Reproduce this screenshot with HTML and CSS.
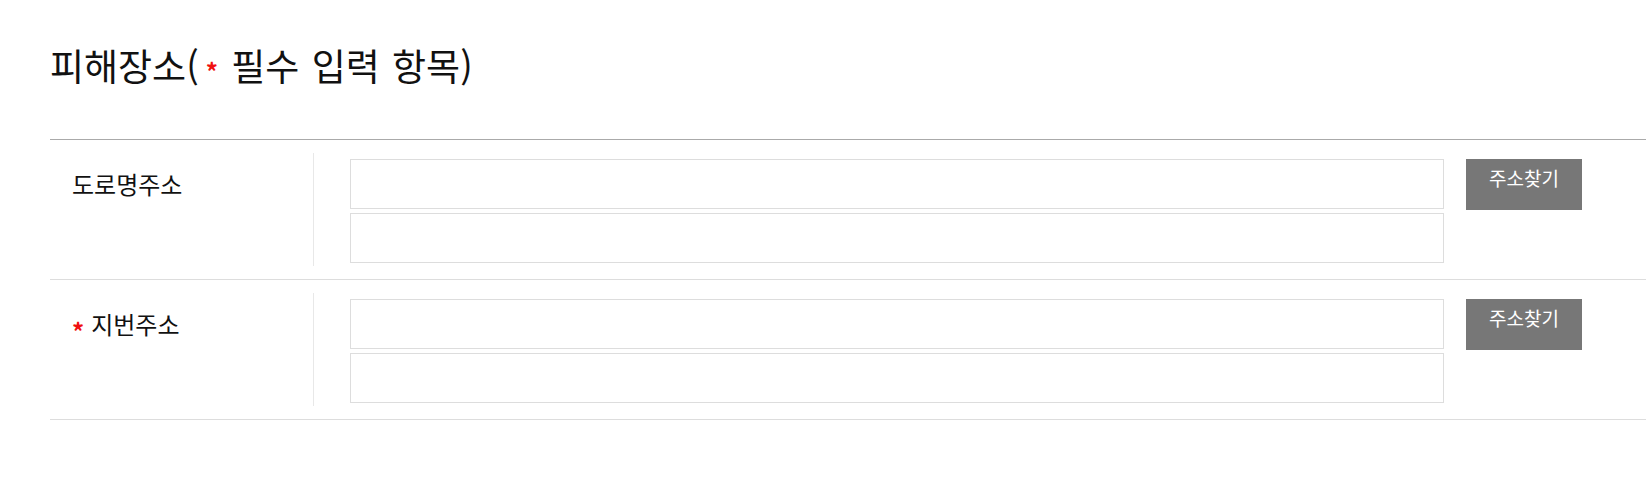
FILE: index.html
```html
<!DOCTYPE html>
<html lang="ko">
<head>
<meta charset="utf-8">
<title>피해장소</title>
<link rel="stylesheet" href="styles.css">
</head>
<body>
<div class="page">
  <h2 class="title">피해장소(<span class="req req-title">*</span> 필수 입력 항목)</h2>
  <div class="form">
    <div class="row">
      <div class="label">도로명주소</div>
      <div class="value">
        <div class="value-inner">
          <div class="inputs">
            <input class="field" type="text">
            <input class="field" type="text">
          </div>
          <button class="btn" type="button">주소찾기</button>
        </div>
      </div>
    </div>
    <div class="row">
      <div class="label"><span class="req req-label">*</span>지번주소</div>
      <div class="value">
        <div class="value-inner">
          <div class="inputs">
            <input class="field" type="text">
            <input class="field" type="text">
          </div>
          <button class="btn" type="button">주소찾기</button>
        </div>
      </div>
    </div>
  </div>
</div>
</body>
</html>
```
FILE: styles.css
```css
html, body {
  margin: 0;
  padding: 0;
  background: #fff;
}
body {
  font-family: "Noto Sans CJK KR", "Noto Sans", sans-serif;
  color: #111;
}
.page {
  padding: 45px 0 0 50px;
}
.title {
  margin: 0;
  font-size: 37px;
  line-height: 40px;
  font-weight: 400;
  color: #111;
  word-spacing: 2px;
}
.req {
  color: #f01010;
  display: inline-block;
  font-weight: 700;
  font-size: 24px;
  line-height: 1;
}
.req-title {
  margin: 0 1px 0 7px;
  vertical-align: 0;
}
.form {
  margin-top: 54px;
  border-top: 1px solid #aaa;
}
.row {
  display: grid;
  grid-template-columns: 263px 1fr;
  border-bottom: 1px solid #ddd;
}
.label {
  padding: 29px 0 0 22px;
  font-size: 24px;
  line-height: 30px;
  color: #111;
}
.req-label {
  margin-right: 7px;
  vertical-align: -7px;
}
.value {
  padding: 13px 0;
}
.value-inner {
  display: flex;
  align-items: flex-start;
  gap: 22px;
  border-left: 1px solid #e8e8e8;
  padding: 6px 0 3px 36px;
}
.inputs {
  display: flex;
  flex-direction: column;
  gap: 4px;
  width: 1094px;
}
.field {
  box-sizing: border-box;
  display: block;
  width: 100%;
  height: 50px;
  margin: 0;
  border: 1px solid #ddd;
  background: #fff;
  padding: 0 10px;
  font-family: inherit;
  font-size: 16px;
}
.btn {
  box-sizing: border-box;
  width: 116px;
  height: 51px;
  margin: 0;
  border: 0;
  background: #777;
  color: #fff;
  font-family: inherit;
  font-size: 19px;
  line-height: 26px;
  padding: 6px 0 19px;
  cursor: pointer;
}
```
